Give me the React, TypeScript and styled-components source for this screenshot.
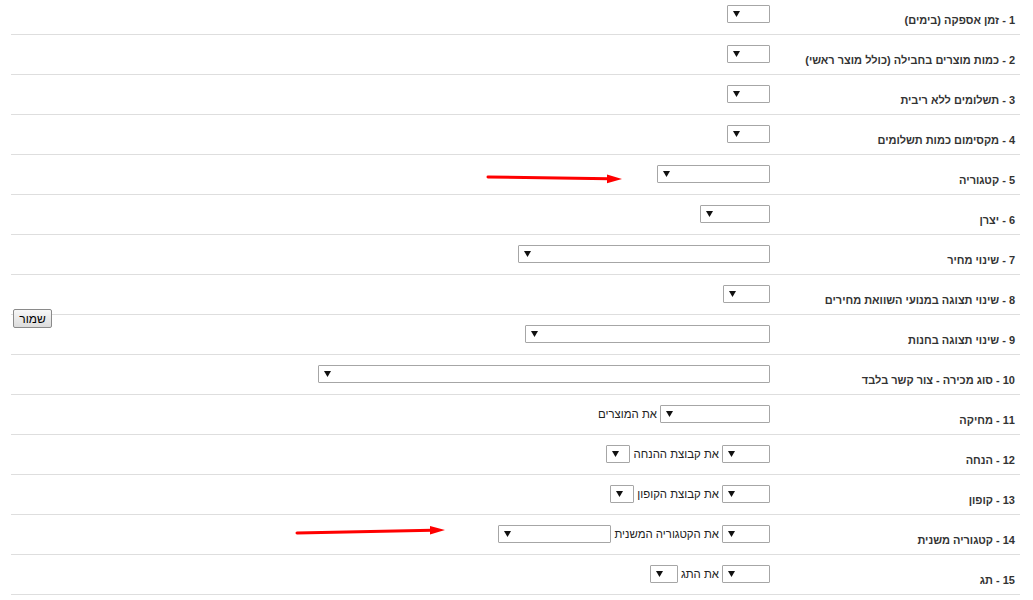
import React from 'react';
import styled, { createGlobalStyle } from 'styled-components';

const GlobalStyle = createGlobalStyle`
  body {
    margin: 0;
    background: #fff;
    font-family: "Liberation Sans", Arial, sans-serif;
    font-size: 12px;
    color: #222;
    overflow: hidden;
  }
`;

type Control = { w: number } | { t: string };

interface RowData {
    label: string
    controls: Control[]
}

const rows: RowData[] = [
    { label: '1 - זמן אספקה (בימים)', controls: [{ w: 43 }] },
    { label: '2 - כמות מוצרים בחבילה (כולל מוצר ראשי)', controls: [{ w: 43 }] },
    { label: '3 - תשלומים ללא ריבית', controls: [{ w: 43 }] },
    { label: '4 - מקסימום כמות תשלומים', controls: [{ w: 43 }] },
    { label: '5 - קטגוריה', controls: [{ w: 113 }] },
    { label: '6 - יצרן', controls: [{ w: 70 }] },
    { label: '7 - שינוי מחיר', controls: [{ w: 252 }] },
    { label: '8 - שינוי תצוגה במנועי השוואת מחירים', controls: [{ w: 47 }] },
    { label: '9 - שינוי תצוגה בחנות', controls: [{ w: 245 }] },
    { label: '10 - סוג מכירה - צור קשר בלבד', controls: [{ w: 452 }] },
    { label: '11 - מחיקה', controls: [{ w: 110 }, { t: 'את המוצרים' }] },
    { label: '12 - הנחה', controls: [{ w: 48 }, { t: 'את קבוצת ההנחה' }, { w: 24 }] },
    { label: '13 - קופון', controls: [{ w: 48 }, { t: 'את קבוצת הקופון' }, { w: 24 }] },
    { label: '14 - קטגוריה משנית', controls: [{ w: 48 }, { t: 'את הקטגוריה המשנית' }, { w: 113 }] },
    { label: '15 - תג', controls: [{ w: 48 }, { t: 'את התג' }, { w: 28 }] },
];

const Page = styled.div`
  position: relative;
  display: flow-root;
  width: 1033px;
  height: 600px;
  padding-left: 11px;
  box-sizing: border-box;
`;

const Table = styled.div`
  direction: rtl;
  width: 1009px;
  margin-top: -5px;
`;

const Row = styled.div`
  display: grid;
  grid-template-columns: 250px 1fr;
  height: 39px;
  border-bottom: 1px solid #dedede;
`;

const Label = styled.div`
  padding: 18px 5px 0 0;
  font-size: 11px;
  font-weight: bold;
  line-height: 14px;
  color: #333;
  white-space: nowrap;
`;

const Controls = styled.div`
  display: flex;
  align-items: flex-start;
  gap: 3px;
  padding-top: 10px;
`;

const SelectBox = styled.div<{ $w: number }>`
  position: relative;
  width: ${p => p.$w}px;
  height: 18px;
  box-sizing: border-box;
  border: 1px solid #a6a6a6;
  border-radius: 1px;
  background: #fff;

  svg {
    position: absolute;
    left: 5px;
    top: 5px;
  }
`;

const InlineText = styled.span`
  font-size: 11.4px;
  line-height: 18px;
  white-space: nowrap;
  color: #222;
`;

const SaveButton = styled.button`
  position: absolute;
  left: 13px;
  top: 309px;
  width: 39px;
  height: 19px;
  padding: 0;
  border: 1px solid #8a8a8a;
  border-radius: 2px;
  background: linear-gradient(#f7f7f7, #dcdcdc);
  font-family: "Liberation Sans", Arial, sans-serif;
  font-size: 12px;
  color: #000;
  direction: rtl;
`;

const Arrow = styled.svg`
  position: absolute;
  pointer-events: none;
`;

const Select: React.FC<{ w: number }> = ({ w }) => (
    <SelectBox $w={w}>
        <svg width="7" height="6" viewBox="0 0 7 6">
            <polygon points="0,0 7,0 3.5,6" fill="#111" />
        </svg>
    </SelectBox>
);

const App: React.FC = () => {
    return (
        <Page>
            <GlobalStyle />
            <Table>
                {rows.map(r => (
                    <Row key={r.label}>
                        <Label>{r.label}</Label>
                        <Controls>
                            {r.controls.map((c, i) =>
                                'w' in c ? <Select key={i} w={c.w} /> : <InlineText key={i}>{c.t}</InlineText>
                            )}
                        </Controls>
                    </Row>
                ))}
            </Table>
            <SaveButton>שמור</SaveButton>

            {/* red arrows drawn over the page */}
            <Arrow width="140" height="16" style={{ left: 485, top: 170 }}>
                <line x1="3" y1="7" x2="124" y2="8.8" stroke="#f00" strokeWidth="3" strokeLinecap="round" />
                <polygon points="122,4.5 137,9 122,13.2" fill="#f00" />
            </Arrow>
            <Arrow width="156" height="18" style={{ left: 294, top: 523 }}>
                <line x1="3" y1="10" x2="138" y2="7.3" stroke="#f00" strokeWidth="3" strokeLinecap="round" />
                <polygon points="136,3 151,7 136,11.6" fill="#f00" />
            </Arrow>
        </Page>
    );
};

export default App;
